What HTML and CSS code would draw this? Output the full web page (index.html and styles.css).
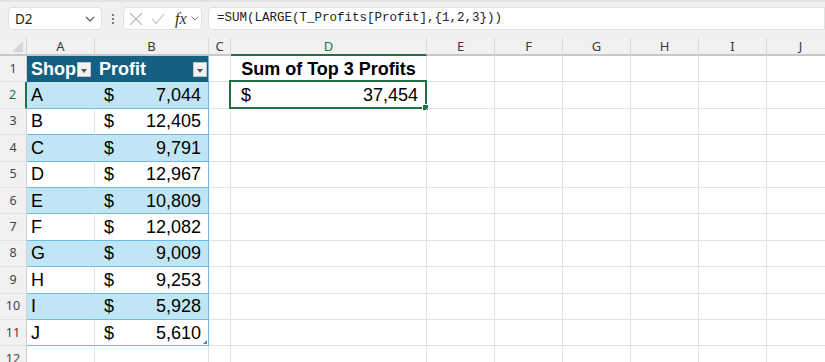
FILE: index.html
```html
<!DOCTYPE html>
<html>
<head>
<meta charset="utf-8">
<link rel="stylesheet" href="styles.css">
</head>
<body>
<div class="app">
  <div class="toolbar">
    <div class="namebox">
      <span class="nb-text">D2</span>
      <svg class="chev" width="10" height="6" viewBox="0 0 10 6"><polyline points="1,1 5,5 9,1" fill="none" stroke="#555" stroke-width="1.2"/></svg>
    </div>
    <div class="dots"><span></span><span></span><span></span></div>
    <div class="fxbox">
      <svg width="14" height="14" viewBox="0 0 14 14"><path d="M1 1L13 13M13 1L1 13" stroke="#b8b8b8" stroke-width="1.1" fill="none"/></svg>
      <svg width="14" height="12" viewBox="0 0 14 12"><polyline points="1,6 5,10.5 13,1" fill="none" stroke="#b8b8b8" stroke-width="1.1"/></svg>
      <span class="fx">fx</span>
      <svg width="8" height="5" viewBox="0 0 8 5"><polyline points="0.5,0.5 4,4 7.5,0.5" fill="none" stroke="#888" stroke-width="1"/></svg>
    </div>
    <div class="formula">=SUM(LARGE(T_Profits[Profit],{1,2,3}))</div>
  </div>

  <div class="sheet">
    <div class="row hdr">
      <div class="c rh corner"><span class="tri"></span></div>
      <div class="c wa ch">A</div><div class="c wb ch">B</div><div class="c wc ch">C</div><div class="c wd ch sel">D</div>
      <div class="c w ch">E</div><div class="c w ch">F</div><div class="c w ch">G</div><div class="c w ch">H</div><div class="c w ch">I</div><div class="c w ch">J</div>
    </div>

    <div class="row">
      <div class="c rh">1</div>
      <div class="c wa th"><span>Shop</span><span class="fb"></span></div>
      <div class="c wb th tr"><span>Profit</span><span class="fb"></span></div>
      <div class="c wc"></div>
      <div class="c wd title">Sum of Top 3 Profits</div>
      <div class="c w"></div><div class="c w"></div><div class="c w"></div><div class="c w"></div><div class="c w"></div><div class="c w"></div>
    </div>

    <div class="row">
      <div class="c rh rsel">2</div>
      <div class="c wa tb band">A</div>
      <div class="c wb tb band tr acc"><span>$</span><span>7,044</span></div>
      <div class="c wc"></div>
      <div class="c wd acc dsel"><span>$</span><span>37,454</span><i class="selbox"><b class="handle"></b></i></div>
      <div class="c w"></div><div class="c w"></div><div class="c w"></div><div class="c w"></div><div class="c w"></div><div class="c w"></div>
    </div>

    <div class="row">
      <div class="c rh">3</div>
      <div class="c wa tb">B</div>
      <div class="c wb tb tr acc"><span>$</span><span>12,405</span></div>
      <div class="c wc"></div><div class="c wd"></div>
      <div class="c w"></div><div class="c w"></div><div class="c w"></div><div class="c w"></div><div class="c w"></div><div class="c w"></div>
    </div>

    <div class="row">
      <div class="c rh">4</div>
      <div class="c wa tb band">C</div>
      <div class="c wb tb band tr acc"><span>$</span><span>9,791</span></div>
      <div class="c wc"></div><div class="c wd"></div>
      <div class="c w"></div><div class="c w"></div><div class="c w"></div><div class="c w"></div><div class="c w"></div><div class="c w"></div>
    </div>

    <div class="row">
      <div class="c rh">5</div>
      <div class="c wa tb">D</div>
      <div class="c wb tb tr acc"><span>$</span><span>12,967</span></div>
      <div class="c wc"></div><div class="c wd"></div>
      <div class="c w"></div><div class="c w"></div><div class="c w"></div><div class="c w"></div><div class="c w"></div><div class="c w"></div>
    </div>

    <div class="row">
      <div class="c rh">6</div>
      <div class="c wa tb band">E</div>
      <div class="c wb tb band tr acc"><span>$</span><span>10,809</span></div>
      <div class="c wc"></div><div class="c wd"></div>
      <div class="c w"></div><div class="c w"></div><div class="c w"></div><div class="c w"></div><div class="c w"></div><div class="c w"></div>
    </div>

    <div class="row">
      <div class="c rh">7</div>
      <div class="c wa tb">F</div>
      <div class="c wb tb tr acc"><span>$</span><span>12,082</span></div>
      <div class="c wc"></div><div class="c wd"></div>
      <div class="c w"></div><div class="c w"></div><div class="c w"></div><div class="c w"></div><div class="c w"></div><div class="c w"></div>
    </div>

    <div class="row">
      <div class="c rh">8</div>
      <div class="c wa tb band">G</div>
      <div class="c wb tb band tr acc"><span>$</span><span>9,009</span></div>
      <div class="c wc"></div><div class="c wd"></div>
      <div class="c w"></div><div class="c w"></div><div class="c w"></div><div class="c w"></div><div class="c w"></div><div class="c w"></div>
    </div>

    <div class="row">
      <div class="c rh">9</div>
      <div class="c wa tb">H</div>
      <div class="c wb tb tr acc"><span>$</span><span>9,253</span></div>
      <div class="c wc"></div><div class="c wd"></div>
      <div class="c w"></div><div class="c w"></div><div class="c w"></div><div class="c w"></div><div class="c w"></div><div class="c w"></div>
    </div>

    <div class="row">
      <div class="c rh">10</div>
      <div class="c wa tb band">I</div>
      <div class="c wb tb band tr acc"><span>$</span><span>5,928</span></div>
      <div class="c wc"></div><div class="c wd"></div>
      <div class="c w"></div><div class="c w"></div><div class="c w"></div><div class="c w"></div><div class="c w"></div><div class="c w"></div>
    </div>

    <div class="row">
      <div class="c rh">11</div>
      <div class="c wa tb">J</div>
      <div class="c wb tb tr acc last"><span>$</span><span>5,610</span><i class="resize"></i></div>
      <div class="c wc"></div><div class="c wd"></div>
      <div class="c w"></div><div class="c w"></div><div class="c w"></div><div class="c w"></div><div class="c w"></div><div class="c w"></div>
    </div>

    <div class="row">
      <div class="c rh">12</div>
      <div class="c wa"></div><div class="c wb"></div><div class="c wc"></div><div class="c wd"></div>
      <div class="c w"></div><div class="c w"></div><div class="c w"></div><div class="c w"></div><div class="c w"></div><div class="c w"></div>
    </div>
  </div>
</div>
</body>
</html>
```

FILE: styles.css
```css
html, body {
  margin: 0;
  padding: 0;
  background: #ffffff;
}
.app {
  width: 825px;
  height: 362px;
  overflow: hidden;
  font-family: "Liberation Sans", Arial, sans-serif;
}

/* toolbar */
.toolbar {
  height: 38px;
  box-sizing: border-box;
  background: #f2efef;
  border-top: 2px solid #e6e3e3;
  padding-top: 5px;
  display: flex;
  align-items: flex-start;
  white-space: nowrap;
}
.namebox {
  margin-left: 8px;
  width: 94px;
  height: 23px;
  box-sizing: border-box;
  background: #fff;
  border: 1px solid #e2e0e0;
  border-radius: 4px;
  display: flex;
  align-items: center;
  justify-content: space-between;
  padding: 0 6px 0 6px;
}
.nb-text {
  font-family: "Noto Sans", "Open Sans", sans-serif;
  font-size: 13.5px;
  color: #222;
}
.chev { margin-top: 1px; }
.dots {
  width: 21px;
  height: 23px;
  display: flex;
  flex-direction: column;
  align-items: center;
  justify-content: center;
  gap: 2px;
}
.dots span {
  width: 2px;
  height: 2px;
  background: #555;
  border-radius: 1px;
}
.fxbox {
  width: 79px;
  height: 23px;
  box-sizing: border-box;
  background: #fff;
  border: 1px solid #e2e0e0;
  border-radius: 4px;
  display: flex;
  align-items: center;
  padding-left: 5px;
  gap: 8px;
}
.fx {
  font-family: "Liberation Serif", "DejaVu Serif", serif;
  font-style: italic;
  font-size: 16px;
  color: #333;
  margin-left: 2px;
  margin-right: -4px;
  line-height: 16px;
}
.formula {
  margin-left: 6px;
  flex: 1;
  height: 23px;
  box-sizing: border-box;
  background: #fff;
  border: 1px solid #e2e0e0;
  border-radius: 4px 0 0 4px;
  padding-left: 8px;
  font-family: "Liberation Mono", "DejaVu Sans Mono", monospace;
  font-size: 12.5px;
  line-height: 21px;
  color: #222;
}

/* sheet */
.row {
  display: flex;
  height: 26.4px;
}
.row.hdr { height: 18px; }
.c {
  flex: none;
  box-sizing: border-box;
  height: 100%;
  border-right: 1px solid #e1e1e1;
  border-bottom: 1px solid #e1e1e1;
  font-size: 18px;
  line-height: 20px;
  color: #000;
  display: flex;
  align-items: center;
  padding-left: 4px;
  white-space: nowrap;
  position: relative;
}
.rh {
  width: 27px;
  padding: 0;
  justify-content: center;
  background: #f1f1f1;
  border-right: 1px solid #d2d2d2;
  font-family: "Noto Sans", "Open Sans", sans-serif;
  font-size: 12.5px;
  color: #444;
}
.wa { width: 68px; }
.wb { width: 114px; }
.wc { width: 22px; }
.wd { width: 196px; }
.w  { width: 68px; }

.ch {
  background: #f1f1f1;
  justify-content: center;
  padding: 0;
  border-right: 1px solid #d8d8d8;
  border-bottom: 2px solid #c8c8c8;
  font-family: "Noto Sans", "Open Sans", sans-serif;
  font-size: 13px;
  color: #3a3a3a;
}
.ch.sel {
  color: #1e7145;
  border-bottom: 2px solid #1e7145;
}
.corner {
  border-bottom: 2px solid #c8c8c8;
}
.tri {
  position: absolute;
  right: 3px;
  bottom: 2px;
  width: 0;
  height: 0;
  border-left: 11px solid transparent;
  border-bottom: 11px solid #d6d6d6;
}
.rsel {
  color: #1e7145;
  border-right: 2px solid #1e7145;
}

/* table */
.th {
  background: #156082;
  color: #fff;
  font-weight: bold;
  border-right-color: #156082;
  border-bottom-color: #156082;
  justify-content: space-between;
  padding-right: 3px;
}
.th.tr { border-right: 1px solid #6cbde6; padding-right: 1px; }
.fb {
  width: 14px;
  height: 15px;
  box-sizing: border-box;
  background: #f2f2f2;
  border: 1px solid #c4c4c4;
  position: relative;
  margin-top: 1px;
}
.fb::after {
  content: "";
  position: absolute;
  left: 3px;
  top: 6px;
  border-left: 3.5px solid transparent;
  border-right: 3.5px solid transparent;
  border-top: 4px solid #555;
}
.tb {
  border-bottom: 1px solid #6cbde6;
}
.tb.band {
  background: #c0e6f5;
  border-right-color: #c0e6f5;
}
.tb.tr {
  border-right: 1px solid #6cbde6;
}
.acc {
  justify-content: space-between;
  padding-left: 9px;
  padding-right: 7px;
}

.title {
  font-weight: bold;
  justify-content: center;
  padding: 0;
}
.dsel { padding-left: 10px; padding-right: 8px; }
.selbox {
  position: absolute;
  left: -2px;
  top: -2px;
  right: -1px;
  bottom: -1px;
  border: 2px solid #1e7145;
}
.handle {
  position: absolute;
  right: -4px;
  bottom: -4px;
  width: 5px;
  height: 5px;
  background: #1e7145;
  border: 1px solid #fff;
}
.resize {
  position: absolute;
  right: 1px;
  bottom: 1px;
  width: 0;
  height: 0;
  border-left: 4px solid transparent;
  border-bottom: 4px solid #3b82c4;
}
```
